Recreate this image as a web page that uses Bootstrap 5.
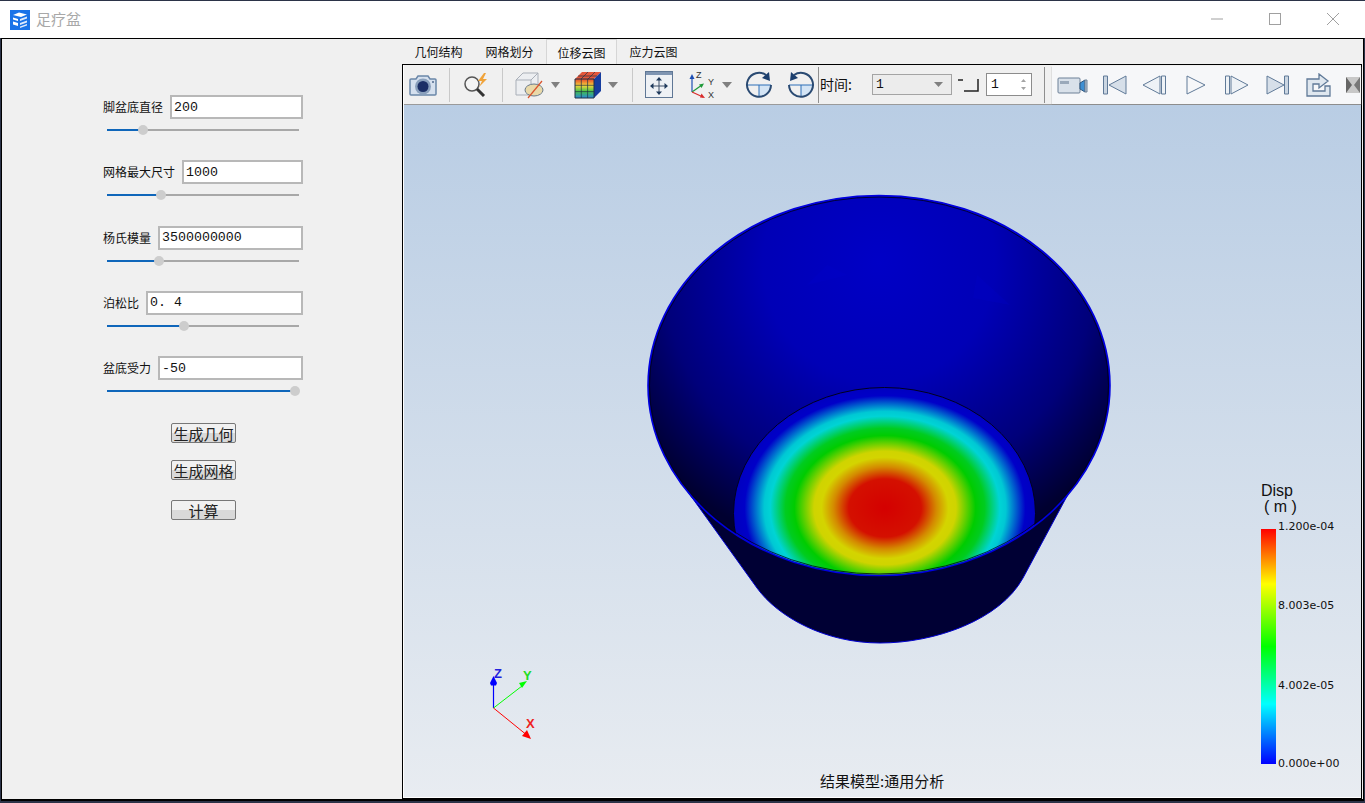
<!DOCTYPE html>
<html lang="zh">
<head>
  <meta charset="UTF-8" />
  <title>足疗盆</title>
  <link href="https://cdn.jsdelivr.net/npm/bootstrap@5.3.2/dist/css/bootstrap.min.css" rel="stylesheet" />
  <style>
    html, body { height: 803px; overflow: hidden; }
    body { background: #2b3348; padding-top: 1px; font-family: "Noto Sans CJK SC", sans-serif; font-size: 12px; color: #111; }
    .titlebar { height: 37px; background: #fff; padding-left: 10px; }
    .app-name { color: #a8a8a8; font-size: 15px; margin-left: 6px; }
    .win-btns { margin-left: auto; margin-bottom: 2px; gap: 46px; padding-right: 26px; }
    .shell { height: 763px; margin: 0 1px 0 1px; background: #f0f0f0; border: 1px solid #000; border-width: 1px 1px 2px 1px; }
    .side { width: 400px; padding-top: 56px; }
    .param-box { width: 201px; margin-left: 100px; height: 65.25px; }
    .field-row { gap: 7px; padding-left: 1px; }
    .param-label { white-space: nowrap; }
    .param-input { height: 24px; min-width: 0; border: 2px solid #b8b8b8; border-radius: 0; padding: 0 2px; font-family: "Liberation Mono", monospace; font-size: 13.3px; color: #111; }
    .slide-track { position: relative; height: 2px; width: 192px; margin: 10px 0 0 5px; background: #a8a8a8; }
    .slide-fill { height: 2px; background: #0f66ba; }
    .slide-knob { position: absolute; top: -4px; width: 10px; height: 10px; margin-left: -5px; border-radius: 50%; background: #cdcdcd; }
    .action-btn { display: block; width: 65px; height: 20px; margin: 0 auto 17px 169px; padding: 0; border: 1px solid #777; border-radius: 2px; font-size: 15px; line-height: 17px; color: #222; background: linear-gradient(#f1f1f1 50%, #d9d9d9 50%); }
    .action-first { margin-top: 2px; }
    .action-btn:last-child { margin-top: 20px; }
    .main-col { width: 960px; }
    .tab-strip { height: 25px; padding-left: 1px; border: 0; }
    .tab-item { width: 71px; height: 25px; text-align: center; line-height: 26px; color: #111; }
    .tab-on { margin-left: 1px; background: #f4f4f4; border: 1px solid #d6d6d6; border-bottom: 0; }
    .tab-last { margin-left: 1px; }
    .viewer { height: 735px; border: 1px solid #000; padding-left: 1px; background: #fff; }
    .tools { height: 40px; background: #f0f0f0; padding: 0 0 0 5px; gap: 12px; border-bottom: 1px solid #9a9a9a; }
    .tools svg { flex: none; }
    .tool-sep { width: 1px; height: 34px; background: #c9c9c9; flex: none; }
    .tool-sep-dark { width: 1px; height: 36px; background: #8f8f8f; flex: none; }
    .drop-arrow { margin-left: -6px; margin-right: 2px; }
    .nudge-3 { margin-left: 3px; }
    .nudge-2 { margin-left: 2px; }
    .nudge-back { margin-left: -1px; }
    .sep-near { margin-left: -9px; }
    .time-label { font-size: 14px; margin-left: -11px; white-space: nowrap; width: 40px; }
    .combo-box { width: 80px; height: 21px; border: 1px solid #a4a4a4; background: #ececec; padding: 0 8px 0 3px; font-family: "Liberation Mono", monospace; font-size: 13px; }
    .step-icon { margin-left: -7px; }
    .spin-box { width: 46px; height: 23px; border: 1px solid #8c8c8c; background: #fff; padding: 0 4px; font-family: "Liberation Mono", monospace; font-size: 13px; margin-left: -6px; }
    .player { height: 38px; background: #f6f7f9; flex: 1; gap: 0; padding-left: 5px; margin-left: -5px; box-shadow: 0 1px 1px #8d8d8d; overflow: hidden; }
    .canvas { position: relative; height: 692px; background: linear-gradient(#b9cde4, #e8ecf1); overflow: hidden; }
    .scene { position: absolute; left: 0; top: 0; }
    .lg-label { font-family: "DejaVu Sans", sans-serif; font-size: 11px; fill: #111; }
    .lg-head { font-family: "Liberation Sans", sans-serif; font-size: 16px; fill: #111; }
    .cap-text { font-family: "Noto Sans CJK SC", sans-serif; font-size: 15px; fill: #111; }
    .axis-text { font-family: "Liberation Sans", sans-serif; font-size: 13px; font-weight: 700; }
  </style>
</head>
<body>
  <div class="titlebar d-flex align-items-center">
    <svg width="20" height="20" viewBox="0 0 20 20"><rect width="20" height="20" fill="#1a73e8"/><path d="M3 5l6-2.500 8 2-6 2.500zM3 7.500l5 1.500v2l-5-1.500zM3 11.500l5 1.500v3l-5-1.500z" fill="#fff"/><path d="M10 9l7-2.500v2l-7 2.500zM10 13l7-2.500v2l-7 2.500zM10 16.500l7-2.500v1.500l-7 2.500z" fill="#dfeafc"/></svg>
    <span class="app-name">足疗盆</span>
    <div class="win-btns d-flex align-items-center">
      <svg width="12" height="12" viewBox="0 0 12 12"><path d="M0 6h12" stroke="#a0a0a0"/></svg>
      <svg width="12" height="12" viewBox="0 0 12 12"><rect x=".5" y=".5" width="11" height="11" fill="none" stroke="#a0a0a0"/></svg>
      <svg width="12" height="12" viewBox="0 0 12 12"><path d="M0 0l12 12M12 0L0 12" stroke="#a0a0a0"/></svg>
    </div>
  </div>

  <div class="shell d-flex">
    <div class="side">
      <div class="param-box">
        <div class="field-row d-flex align-items-center"><span class="param-label">脚盆底直径</span><input class="param-input flex-grow-1" value="200" /></div>
        <div class="slide-track"><div class="slide-fill" style="width:19%"></div><div class="slide-knob" style="left:19%"></div></div>
      </div>
      <div class="param-box">
        <div class="field-row d-flex align-items-center"><span class="param-label">网格最大尺寸</span><input class="param-input flex-grow-1" value="1000" /></div>
        <div class="slide-track"><div class="slide-fill" style="width:28%"></div><div class="slide-knob" style="left:28%"></div></div>
      </div>
      <div class="param-box">
        <div class="field-row d-flex align-items-center"><span class="param-label">杨氏模量</span><input class="param-input flex-grow-1" value="3500000000" /></div>
        <div class="slide-track"><div class="slide-fill" style="width:27%"></div><div class="slide-knob" style="left:27%"></div></div>
      </div>
      <div class="param-box">
        <div class="field-row d-flex align-items-center"><span class="param-label">泊松比</span><input class="param-input flex-grow-1" value="0. 4" /></div>
        <div class="slide-track"><div class="slide-fill" style="width:40%"></div><div class="slide-knob" style="left:40%"></div></div>
      </div>
      <div class="param-box">
        <div class="field-row d-flex align-items-center"><span class="param-label">盆底受力</span><input class="param-input flex-grow-1" value="-50" /></div>
        <div class="slide-track"><div class="slide-fill" style="width:98%"></div><div class="slide-knob" style="left:98%"></div></div>
      </div>
      <button class="action-btn action-first" type="button">生成几何</button>
      <button class="action-btn" type="button">生成网格</button>
      <button class="action-btn" type="button">计算</button>
    </div>

    <div class="main-col">
      <ul class="nav tab-strip">
        <li class="tab-item">几何结构</li>
        <li class="tab-item">网格划分</li>
        <li class="tab-item tab-on">位移云图</li>
        <li class="tab-item tab-last">应力云图</li>
      </ul>
      <div class="viewer">
        <div class="tools d-flex align-items-center">
          <!-- camera -->
          <svg width="28" height="24" viewBox="0 0 28 24"><path d="M2 6h5l2-3h10l2 3h5q1 0 1 1v14q0 1-1 1H2q-1 0-1-1V7q0-1 1-1z" fill="#d5e0ee" stroke="#6a86a8" stroke-width="1.500"/><circle cx="14" cy="13.500" r="8" fill="#8aa0bc"/><circle cx="14" cy="13.500" r="5.500" fill="#1c2f66"/><circle cx="24" cy="9" r="1" fill="#4f6a8d"/></svg>
          <div class="tool-sep"></div>
          <!-- search -->
          <svg width="28" height="24" viewBox="0 0 28 24"><circle cx="10" cy="11" r="7" fill="#f4f4f4" stroke="#555" stroke-width="1.500"/><path d="M15 16l7 7" stroke="#333" stroke-width="3"/><path d="M22 0l-6 8h4l-3 6 8-8h-4l3-6z" fill="#f0a33a"/></svg>
          <div class="tool-sep"></div>
          <!-- section cube -->
          <svg width="30" height="28" viewBox="0 0 30 28"><path d="M1 9l7-7h15v15l-7 7H1z" fill="#eceef1" stroke="#a9afb8"/><path d="M1 9h15v15M16 9l7-7" fill="none" stroke="#a9afb8"/><ellipse cx="19" cy="19" rx="9" ry="6" fill="#e9d9a9" stroke="#6a7a8a"/><path d="M13 27L27 10" stroke="#d9532c" stroke-width="1.200"/></svg>
          <svg class="drop-arrow" width="9" height="6" viewBox="0 0 9 6"><path d="M0 0h9L4.500 6z" fill="#808080"/></svg>
          <!-- color cube -->
          <svg width="28" height="28" viewBox="0 0 28 28">
            <defs><linearGradient id="cubeFace" x1="0" y1="0" x2="0" y2="1"><stop offset="0" stop-color="#e8452c"/><stop offset=".35" stop-color="#f5d53a"/><stop offset=".65" stop-color="#43c24a"/><stop offset="1" stop-color="#2b86d8"/></linearGradient></defs>
            <path d="M1 8L8 1h19L20 8z" fill="#e4573a"/><path d="M1 8h19v19H1z" fill="url(#cubeFace)"/><path d="M20 8l7-7v19l-7 7z" fill="#163d9e"/>
            <path d="M7.300 8v19M13.600 8v19M1 14.300h19M1 20.600h19M7 8l7-7M14 8l7-7M4 5h19" stroke="#1f3347" stroke-width=".7" fill="none"/><path d="M1 8h19v19H1z" fill="none" stroke="#1f3347"/>
          </svg>
          <svg class="drop-arrow" width="10" height="6" viewBox="0 0 10 6"><path d="M0 0h10L5 6z" fill="#808080"/></svg>
          <div class="tool-sep"></div>
          <!-- fit view -->
          <svg width="28" height="27" viewBox="0 0 28 27"><rect x=".5" y=".5" width="27" height="26" fill="#eef1f5" stroke="#5f7795"/><rect x="1" y="1" width="26" height="3" fill="#7f95b2"/><path d="M14 8v14M7 15h14" stroke="#3d4f68"/><path d="M14 6l-3 3.500h6zM14 24l-3-3.500h6zM5 15l3.500-3v6zM23 15l-3.500-3v6z" fill="#1f3a5c"/></svg>
          <!-- axes -->
          <svg class="nudge-3" width="28" height="28" viewBox="0 0 28 28"><path d="M4 21V6" stroke="#1e4fb5" stroke-width="1.200"/><path d="M4 3L1.500 8h5z" fill="#1e4fb5"/><path d="M4 21l10-7" stroke="#1f9a3a" stroke-width="1.200"/><path d="M16 12.500l-5 1 2.500 3.500z" fill="#1f9a3a"/><path d="M4 21l11 5" stroke="#d92b2b" stroke-width="1.200"/><path d="M17 27l-5-.5 1.500-4z" fill="#d92b2b"/><text x="8" y="7" font-family="Liberation Sans, sans-serif" font-size="9" fill="#333">Z</text><text x="20" y="14" font-family="Liberation Sans, sans-serif" font-size="9" fill="#333">Y</text><text x="20" y="27" font-family="Liberation Sans, sans-serif" font-size="9" fill="#333">X</text></svg>
          <svg class="drop-arrow" width="10" height="6" viewBox="0 0 10 6"><path d="M0 0h10L5 6z" fill="#808080"/></svg>
          <!-- rotate cw -->
          <svg class="nudge-back" width="28" height="28" viewBox="0 0 28 28"><path d="M14 14h12a12 12 0 0 1-12 12z" fill="#d3e4f5"/><path d="M2 14h24M14 14v12" stroke="#2d6fb8"/><path d="M21 4A12 12 0 1 0 26 14" fill="none" stroke="#2a4a72" stroke-width="2"/><path d="M24 1l1 9-8-3z" fill="#1c3f6e"/></svg>
          <!-- rotate ccw -->
          <svg class="nudge-2" width="28" height="28" viewBox="0 0 28 28"><path d="M14 14h12a12 12 0 0 1-12 12z" fill="#d3e4f5"/><path d="M2 14h24M14 14v12" stroke="#2d6fb8"/><path d="M7 4A12 12 0 1 1 2 14" fill="none" stroke="#2a4a72" stroke-width="2"/><path d="M4 1l-1 9 8-3z" fill="#1c3f6e"/></svg>
          <div class="tool-sep-dark sep-near"></div>
          <span class="time-label">时间:</span>
          <div class="combo-box d-flex align-items-center justify-content-between"><span>1</span><svg width="9" height="5" viewBox="0 0 9 5"><path d="M0 0h9L4.500 5z" fill="#808080"/></svg></div>
          <svg class="step-icon" width="23" height="14" viewBox="0 0 23 14"><path d="M1 2h5M7 13h14V1" fill="none" stroke="#222" stroke-width="1.500"/></svg>
          <div class="spin-box d-flex align-items-center justify-content-between"><span>1</span><svg width="7" height="13" viewBox="0 0 7 13"><path d="M3.500 1L6 4H1zM3.500 12L6 9H1z" fill="#a4a4a4"/></svg></div>
          <div class="tool-sep-dark"></div>
          <div class="player d-flex align-items-center">
            <svg width="45" height="24" viewBox="0 0 45 24"><rect x="1" y="5" width="22" height="15" rx="1" fill="#d9e1ea" stroke="#6d8097"/><rect x="3" y="8" width="9" height="3" fill="#9aa9ba"/><path d="M23 10l5-3v12l-5-3z" fill="#3e8fd3" stroke="#30577f"/><path d="M28 7h2v12h-2z" fill="#b9c6d4" stroke="#6d8097"/></svg>
            <svg width="40" height="24" viewBox="0 0 40 24"><path d="M1.500 3h4v18h-4z" fill="#cbd6e2" stroke="#607a98"/><path d="M24 3v18L7 12z" fill="#d6dfe9" stroke="#607a98"/></svg>
            <svg width="44" height="24" viewBox="0 0 44 24"><path d="M18 3v18L1 12z" fill="#eef2f6" stroke="#607a98"/><path d="M19.500 3h4v18h-4z" fill="#eef2f6" stroke="#607a98"/></svg>
            <svg width="38" height="24" viewBox="0 0 38 24"><path d="M1 3v18l18-9z" fill="#f6f7f9" stroke="#607a98"/></svg>
            <svg width="42" height="24" viewBox="0 0 42 24"><path d="M1.500 3h4v18h-4z" fill="#eef2f6" stroke="#607a98"/><path d="M7 3v18l17-9z" fill="#eef2f6" stroke="#607a98"/></svg>
            <svg width="40" height="24" viewBox="0 0 40 24"><path d="M1 3v18l17-9z" fill="#d6dfe9" stroke="#607a98"/><path d="M18.500 3h4v18h-4z" fill="#cbd6e2" stroke="#607a98"/></svg>
            <svg width="40" height="24" viewBox="0 0 40 24"><path d="M1 6H13V1L22 8L13 15V11H7V18H19V13H24V23H1Z" fill="#dfe7ef" stroke="#607a98" stroke-width="1.300"/></svg>
            <svg width="14" height="20" viewBox="0 0 14 20"><rect x="0" y="2" width="14" height="16" fill="#c8c8c8"/><path d="M0 2l6 8-6 8z" fill="#666"/><path d="M14 2L8 10l6 8z" fill="#777"/></svg>
          </div>
        </div>

        <div class="canvas">
          <svg class="scene" width="958" height="692" viewBox="404 105 958 692">
            <defs>
              <radialGradient id="wallGrad" gradientUnits="userSpaceOnUse" cx="0" cy="0" r="1" gradientTransform="translate(879 262) scale(290 300)">
                <stop offset="0" stop-color="#0000c6"/>
                <stop offset=".4" stop-color="#0000b6"/>
                <stop offset=".75" stop-color="#00007a"/>
                <stop offset="1" stop-color="#000030"/>
              </radialGradient>
              <radialGradient id="floorGrad" gradientUnits="userSpaceOnUse" cx="0" cy="0" r="151" gradientTransform="translate(885 508) scale(1 .8)">
                <stop offset="0" stop-color="#d40000"/>
                <stop offset=".24" stop-color="#d41000"/>
                <stop offset=".34" stop-color="#d48a00"/>
                <stop offset=".42" stop-color="#d4d400"/>
                <stop offset=".47" stop-color="#cfd400"/>
                <stop offset=".6" stop-color="#00cc00"/>
                <stop offset=".66" stop-color="#00cc20"/>
                <stop offset=".76" stop-color="#00d4d4"/>
                <stop offset=".8" stop-color="#00c8d4"/>
                <stop offset=".93" stop-color="#0000c8"/>
                <stop offset="1" stop-color="#0000c0"/>
              </radialGradient>
              <linearGradient id="legendGrad" x1="0" y1="0" x2="0" y2="1">
                <stop offset="0" stop-color="#ff0000"/>
                <stop offset=".234" stop-color="#ffff00"/>
                <stop offset=".5" stop-color="#00ff00"/>
                <stop offset=".745" stop-color="#00ffff"/>
                <stop offset="1" stop-color="#0000ff"/>
              </linearGradient>
              <clipPath id="rimClip"><ellipse cx="879" cy="385.500" rx="231" ry="190"/></clipPath>
            </defs>

            <!-- bowl outside -->
            <path d="M683 485L757 588C778 617 825 643 880 643C935 643 1000 620 1023 578L1073 485z" fill="#000034" stroke="#0000d0" stroke-width="1"/>
            <!-- inner wall -->
            <ellipse cx="879" cy="385.500" rx="231" ry="190" fill="url(#wallGrad)"/>
            <path d="M807 285l40-10-20-10zM977 275l33 30-37-7z" fill="#0000d0" opacity=".18"/>
            <!-- floor -->
            <g clip-path="url(#rimClip)">
              <ellipse cx="884.500" cy="513.500" rx="151" ry="126" fill="url(#floorGrad)" stroke="#000020" stroke-width="1"/>
            </g>
            <ellipse cx="879" cy="385.500" rx="229.500" ry="188.500" fill="none" stroke="#00001c" stroke-width=".8"/>
            <ellipse cx="879" cy="385.500" rx="231" ry="190" fill="none" stroke="#0000e0" stroke-width="1.600"/>

            <!-- triad -->
            <path d="M493.500 708V680" stroke="#0000ff" stroke-width="1.200"/>
            <path d="M493.500 676l-3.500 7 1 2.500h5l1-2.500z" fill="#0000ff"/>
            <path d="M493.500 708L522 686" stroke="#00ff00"/>
            <path d="M527 681l-8 2 3 5z" fill="#00ff00"/>
            <path d="M493.500 708L528 736" stroke="#ff0000"/>
            <path d="M531 739l-4-9-5 6z" fill="#ff0000"/>
            <text class="axis-text" x="494" y="678" fill="#2222dd">Z</text>
            <text class="axis-text" x="523" y="680" fill="#22dd22">Y</text>
            <text class="axis-text" x="526" y="728" fill="#ee2222">X</text>

            <!-- legend -->
            <text class="lg-head" x="1261" y="496">Disp</text>
            <text class="lg-head" x="1264" y="512">( m )</text>
            <rect x="1261" y="529" width="15" height="235" fill="url(#legendGrad)"/>
            <text class="lg-label" x="1278" y="530">1.200e-04</text>
            <text class="lg-label" x="1278" y="609">8.003e-05</text>
            <text class="lg-label" x="1278" y="689">4.002e-05</text>
            <text class="lg-label" x="1278" y="767">0.000e+00</text>

            <text class="cap-text" x="820" y="787">结果模型:通用分析</text>
          </svg>
        </div>
      </div>
    </div>
  </div>
  <script src="https://cdn.jsdelivr.net/npm/bootstrap@5.3.2/dist/js/bootstrap.bundle.min.js"></script>
</body>
</html>
